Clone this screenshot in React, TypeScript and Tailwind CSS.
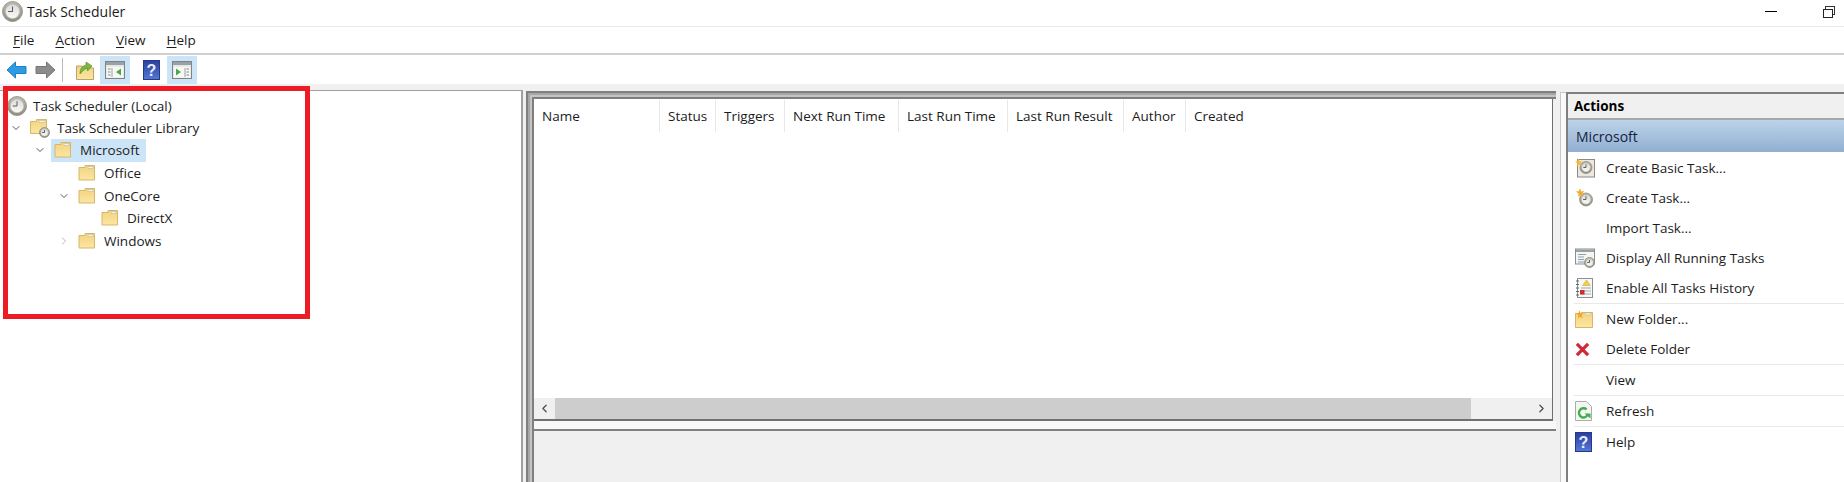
import React from 'react';
import { ChevronDown, ChevronLeft, ChevronRight } from 'lucide-react';

const ClockFace = ({ cx, cy, r }: { cx: number; cy: number; r: number }) => (
  <g>
    <circle cx={cx} cy={cy} r={r} fill="url(#ring)" stroke="#8d8a80" strokeWidth="0.8" />
    <circle cx={cx} cy={cy} r={r * 0.7} fill="url(#face)" stroke="#c9c6bb" strokeWidth="0.5" />
    <path d={`M${cx} ${cy - r * 0.5}V${cy}H${cx - r * 0.45}`} fill="none" stroke="#5f5f58" strokeWidth="1" />
  </g>
);

const Folder = ({ className = 'w-[18px] h-[18px]' }: { className?: string }) => (
  <svg viewBox="0 0 18 18" className={className}>
    <path d="M1 3.5h6v-2h9.5v14.5H1z" fill="url(#folder)" stroke="#d6b768" strokeWidth="1" />
    <path d="M10 2.5h5v2h-5z" fill="#f5f3ea" stroke="#b9b29a" strokeWidth="0.5" />
  </svg>
);

const FolderClock = () => (
  <svg viewBox="0 0 20 20" className="w-[20px] h-[20px]">
    <path d="M0.5 3.5h6v-2h10v14h-16z" fill="url(#folder)" stroke="#d6b768" strokeWidth="1" />
    <path d="M9 2.5h6v2H9z" fill="#f5f3ea" stroke="#b9b29a" strokeWidth="0.5" />
    <ClockFace cx={14.5} cy={14.5} r={5} />
  </svg>
);

const Clock = ({ size = 'w-[20px] h-[20px]' }: { size?: string }) => (
  <svg viewBox="0 0 20 20" className={size}>
    <ClockFace cx={10} cy={10} r={9.5} />
  </svg>
);

const Arrow = ({ color, edge, flip }: { color: string; edge: string; flip?: boolean }) => (
  <svg viewBox="0 0 21 18" className={`w-[21px] h-[18px] ${flip ? '-scale-x-100' : ''}`}>
    <path d="M1 9l8.5-8v4.5h10.5v7H9.5V17z" fill={color} stroke={edge} strokeWidth="1" strokeLinejoin="round" />
  </svg>
);

const HelpBook = ({ size = 'w-[17px] h-[20px]' }: { size?: string }) => (
  <svg viewBox="0 0 17 20" className={size}>
    <rect x="0.5" y="0.5" width="16" height="19" fill="url(#help)" stroke="#24398a" />
    <text x="8.5" y="15.5" textAnchor="middle" fontSize="16" fontWeight="700" fontFamily="Liberation Sans, sans-serif" fill="#e8ecff">?</text>
  </svg>
);

const PaneToggle = ({ right }: { right?: boolean }) => (
  <svg viewBox="0 0 20 18" className="w-[20px] h-[18px]">
    <rect x="0.5" y="0.5" width="19" height="17" fill="#e9e9e4" stroke="#7f8487" />
    <rect x="1" y="1" width="18" height="3" fill="#9aa0a3" />
    <rect x="2" y="6" width="16" height="10.5" fill="#f8f8f4" />
    {right ? (
      <>
        <path d="M4 7.5l5 3.5-5 3.5z" fill="#4aa84a" />
        <path d="M13 7v9" stroke="#9aa0a3" />
        <path d="M14.5 8h2.5M14.5 11h2.5M14.5 14h2.5" stroke="#7f8487" />
      </>
    ) : (
      <>
        <path d="M16 7.5l-5 3.5 5 3.5z" fill="#4aa84a" />
        <path d="M7 7v9" stroke="#9aa0a3" />
        <path d="M3 8h2.5M3 11h2.5M3 14h2.5" stroke="#7f8487" />
      </>
    )}
  </svg>
);

const UpFolder = () => (
  <svg viewBox="0 0 18 20" className="w-[18px] h-[20px]">
    <path d="M0.5 6h6l1.5 2h9.5v11.5H0.5z" fill="url(#folder)" stroke="#b9a468" />
    <path d="M4 14c0-5 2-8 6-9V2l6 4-4.5 5V8c-3 1-5 3-7.5 6z" fill="#7ab83f" stroke="#4d8a28" strokeWidth="0.6" />
  </svg>
);

const BasicTaskIcon = () => (
  <svg viewBox="0 0 20 20" className="w-[20px] h-[20px]">
    <rect x="2.5" y="1.5" width="17" height="17.5" fill="#ece8df" stroke="#8f8a80" />
    <ClockFace cx={11} cy={9.5} r={6} />
    <path d="M0 3l2.2 0.6L3.5 0.5l1.2 3 3-0.4-2 2.2 1.2 2.7-3-1.2-2 1.6 0.4-2.8z" fill="#f4bb3a" />
  </svg>
);

const NewTaskIcon = () => (
  <svg viewBox="0 0 20 20" className="w-[20px] h-[20px]">
    <ClockFace cx={11} cy={11.5} r={6.5} />
    <path d="M1 3l2.4 0.6L5 0.5l1.2 3 3.2-0.4-2 2.4 1.2 2.8-3-1.2-2.4 1.8 0.4-3z" fill="#f4ab2a" />
  </svg>
);

const DisplayIcon = () => (
  <svg viewBox="0 0 20 20" className="w-[20px] h-[20px]">
    <rect x="0.5" y="1" width="19" height="15" fill="#f4f4f0" stroke="#8a9095" />
    <rect x="1" y="1.5" width="18" height="2.5" fill="#9aa0a3" />
    <path d="M3 6.5h8M3 9h6M3 11.5h6M3 14h6" stroke="#8ea1b5" />
    <ClockFace cx={14.5} cy={14.5} r={5} />
  </svg>
);

const HistoryIcon = () => (
  <svg viewBox="0 0 18 20" className="w-[18px] h-[20px]">
    <rect x="2.5" y="0.5" width="15" height="19" fill="#f8f8f6" stroke="#8a9095" />
    <path d="M1 3h3M1 6.5h3M1 10h3M1 13.5h3M1 17h3" stroke="#5a6a78" />
    <path d="M11.5 2l4 5.5h-8z" fill="#f2cf4a" stroke="#c9a52a" strokeWidth="0.5" />
    <path d="M6 10h10M6 13h10M6 16h10" stroke="#9aa6b2" />
    <rect x="5" y="12" width="4.5" height="4.5" fill="#c9302c" />
  </svg>
);

const NewFolderIcon = () => (
  <svg viewBox="0 0 18 18" className="w-[18px] h-[18px]">
    <path d="M0.5 3.5h6v-1h11v15H0.5z" fill="url(#folder)" stroke="#d6b768" />
    <path d="M10 3h6v2h-6z" fill="#f5f3ea" stroke="#b9b29a" strokeWidth="0.5" />
    <path d="M1 3l2.3 0.6L4.5 0.5l1.2 3 3-0.4-2 2.2 1.2 2.7-3-1.2-2 1.6 0.4-2.8z" fill="#f2a72c" />
  </svg>
);

const DeleteIcon = () => (
  <svg viewBox="0 0 16 16" className="w-[15px] h-[15px]">
    <path d="M2 2l12 12M14 2L2 14" stroke="#cf2a36" strokeWidth="3.4" />
  </svg>
);

const RefreshIcon = () => (
  <svg viewBox="0 0 17 20" className="w-[17px] h-[20px]">
    <path d="M0.5 0.5h11l5 5v14H0.5z" fill="#f4f6f2" stroke="#a9aea8" />
    <path d="M13 13a4.6 4.6 0 1 1-1.4-4.6" fill="none" stroke="#45ad4f" strokeWidth="2.4" />
    <path d="M9.5 12.5h6v5z" fill="#45ad4f" />
  </svg>
);

const menuItems: [string, string][] = [
  ['F', 'ile'],
  ['A', 'ction'],
  ['V', 'iew'],
  ['H', 'elp'],
];

const columns = [
  { label: 'Name', width: 'w-[126px]' },
  { label: 'Status', width: 'w-[56px]' },
  { label: 'Triggers', width: 'w-[69px]' },
  { label: 'Next Run Time', width: 'w-[114px]' },
  { label: 'Last Run Time', width: 'w-[109px]' },
  { label: 'Last Run Result', width: 'w-[116px]' },
  { label: 'Author', width: 'w-[62px]' },
];

const TreeRow = ({
  indent,
  icon,
  label,
  chevron,
  selected,
  gap = 'gap-[8px]',
}: {
  indent: string;
  icon: React.ReactNode;
  label: string;
  chevron?: 'down' | 'right';
  selected?: boolean;
  gap?: string;
}) => (
  <div className={`flex h-[22.6px] items-center ${indent}`}>
    <span className="flex w-[14px] shrink-0 justify-center">
      {chevron === 'down' && <ChevronDown size={12} strokeWidth={1.8} className="text-[#444444]" />}
      {chevron === 'right' && <ChevronRight size={12} strokeWidth={1.6} className="text-[#a6a6a6]" />}
    </span>
    <div className={`ml-[4px] flex h-[22.6px] items-center pl-[3px] pr-[6px] ${gap} ${selected ? 'bg-[#cce4f7]' : ''}`}>
      {icon}
      <span>{label}</span>
    </div>
  </div>
);

const ActionRow = ({
  icon,
  label,
  sep,
}: {
  icon?: React.ReactNode;
  label: string;
  sep?: boolean;
}) => (
  <div className={`ml-[6px] flex items-center ${sep ? 'h-[31px] border-t border-[#e8e8e8]' : 'h-[30px]'}`}>
    <span className="flex w-[32px] shrink-0 items-center pl-[1px]">{icon}</span>
    <span>{label}</span>
  </div>
);

export default function App() {
  return (
    <div className="relative flex h-[482px] w-[1844px] flex-col overflow-hidden bg-white font-['Open_Sans',sans-serif] text-[13.5px] text-[#1c1c1c]">
      {/* shared gradients for the icons */}
      <svg className="absolute h-0 w-0">
        <defs>
          <linearGradient id="ring" x1="0" y1="0" x2="0" y2="1">
            <stop offset="0" stopColor="#bdbab0" />
            <stop offset="1" stopColor="#908d83" />
          </linearGradient>
          <linearGradient id="face" x1="0" y1="0" x2="0" y2="1">
            <stop offset="0" stopColor="#d9dbe0" />
            <stop offset="1" stopColor="#fbfaf2" />
          </linearGradient>
          <linearGradient id="folder" x1="0" y1="0" x2="0" y2="1">
            <stop offset="0" stopColor="#f3d37e" />
            <stop offset="1" stopColor="#fbe6a2" />
          </linearGradient>
          <linearGradient id="help" x1="0" y1="0" x2="0" y2="1">
            <stop offset="0" stopColor="#2a3f9c" />
            <stop offset="1" stopColor="#5577d6" />
          </linearGradient>
        </defs>
      </svg>

      {/* title bar */}
      <div className="flex h-[27px] shrink-0 items-center border-b border-[#e9e9e9] pb-[3px] pl-[2px] text-[14px]">
        <Clock size="h-[21px] w-[21px]" />
        <span className="ml-[4px]">Task Scheduler</span>
        <div className="ml-auto mr-[9px] flex items-center gap-[46px]">
          <span className="h-px w-[12px] bg-black" />
          <span className="relative h-[12px] w-[12px]">
            <span className="absolute left-[2px] top-0 h-[9px] w-[10px] border border-[#333333]" />
            <span className="absolute bottom-0 left-0 h-[9px] w-[10px] border border-[#222222] bg-white" />
          </span>
        </div>
      </div>

      {/* menu */}
      <div className="flex h-[28px] shrink-0 items-center gap-[21px] border-b-2 border-[#d0d0d0] pl-[13px]">
        {menuItems.map(([first, rest]) => (
          <span key={first}>
            <span className="underline underline-offset-2">{first}</span>
            {rest}
          </span>
        ))}
      </div>

      {/* toolbar */}
      <div className="flex h-[29px] shrink-0 items-center pl-[6px]">
        <Arrow color="#2f9be0" edge="#1f7fc4" />
        <span className="ml-[8px]">
          <Arrow color="#8c8c8c" edge="#767676" flip />
        </span>
        <span className="ml-[6px] h-[24px] w-px bg-[#b8b8b8]" />
        <span className="ml-[13px] flex">
          <UpFolder />
        </span>
        <span className="ml-[6px] flex h-[28px] w-[30px] items-center justify-center bg-[#cce4f7]">
          <PaneToggle />
        </span>
        <span className="ml-[13px] flex">
          <HelpBook />
        </span>
        <span className="ml-[7px] flex h-[28px] w-[30px] items-center justify-center bg-[#cce4f7]">
          <PaneToggle right />
        </span>
      </div>

      {/* panes */}
      <div className="flex min-h-0 flex-1 bg-[#f0f0f0]">
        <div className="mt-[6px] w-[523px] shrink-0 border-r-2 border-t border-[#a0a0a0] bg-white pt-[4px]">
          <div className="flex h-[21.6px] items-center gap-[6px] pl-[7px]">
            <Clock />
            <span>Task Scheduler (Local)</span>
          </div>
          <TreeRow indent="pl-[9px]" chevron="down" icon={<FolderClock />} label="Task Scheduler Library" gap="gap-[7px]" />
          <TreeRow indent="pl-[33px]" chevron="down" icon={<Folder />} label="Microsoft" selected />
          <TreeRow indent="pl-[57px]" icon={<Folder />} label="Office" />
          <TreeRow indent="pl-[57px]" chevron="down" icon={<Folder />} label="OneCore" />
          <TreeRow indent="pl-[80px]" icon={<Folder />} label="DirectX" />
          <TreeRow indent="pl-[57px]" chevron="right" icon={<Folder />} label="Windows" />
        </div>

        <div className="ml-[3px] mt-[7px] flex w-[1030px] shrink-0 flex-col border-l-2 border-t-2 border-[#808080]">
          <div className="flex flex-1 flex-col border-l-2 border-t-2 border-[#a6a6a6]">
            <div className="flex flex-1 flex-col border-l-2 border-t-2 border-[#c4c4c4]">
              <div className="flex flex-1 flex-col border-l-2 border-t-2 border-[#7f7f7f]">
                <div className="mr-[3px] flex h-[322px] shrink-0 flex-col border-b-2 border-r border-[#707070] bg-white">
                  <div className="flex flex-1 items-start pt-[1px]">
                    <div className="flex h-[32px] w-full">
                      {columns.map((col) => (
                        <div key={col.label} className={`flex items-center whitespace-nowrap border-r border-[#e8e8e8] pl-[8px] ${col.width}`}>
                          {col.label}
                        </div>
                      ))}
                      <div className="flex items-center pl-[8px]">Created</div>
                    </div>
                  </div>
                  <div className="flex h-[21px] shrink-0 bg-[#f0f0f0]">
                    <span className="flex w-[21px] items-center justify-center text-[#505050]">
                      <ChevronLeft size={13} strokeWidth={2.4} />
                    </span>
                    <span className="w-[916px] bg-[#cdcdcd]" />
                    <span className="flex-1" />
                    <span className="flex w-[21px] items-center justify-center text-[#505050]">
                      <ChevronRight size={13} strokeWidth={2.4} />
                    </span>
                  </div>
                </div>
                <div className="h-[8px] shrink-0 bg-[#f8f8f8]" />
                <div className="flex-1 border-t-2 border-[#808080] bg-[#f0f0f0]" />
              </div>
            </div>
          </div>
        </div>

        <div className="ml-[4px] mt-[8px] w-[6px] shrink-0 border-l border-t border-[#c8c8c8] bg-[#fafafa]" />

        <div className="mt-[8px] flex-1 border-l-2 border-t-2 border-[#808080] bg-white">
          <div className="flex h-[26px] items-center border-b-2 border-[#a8a8a8] bg-[#f0f0f0] pl-[6px] font-bold text-black">
            Actions
          </div>
          <div className="mb-[1px] flex h-[32px] items-center bg-gradient-to-b from-[#bcd3ea] to-[#92afd1] pl-[8px] pt-[1px] text-[14px] text-[#14233c]">
            Microsoft
          </div>
          <ActionRow icon={<BasicTaskIcon />} label="Create Basic Task..." />
          <ActionRow icon={<NewTaskIcon />} label="Create Task..." />
          <ActionRow label="Import Task..." />
          <ActionRow icon={<DisplayIcon />} label="Display All Running Tasks" />
          <ActionRow icon={<HistoryIcon />} label="Enable All Tasks History" />
          <ActionRow sep icon={<NewFolderIcon />} label="New Folder..." />
          <ActionRow icon={<DeleteIcon />} label="Delete Folder" />
          <ActionRow sep label="View" />
          <ActionRow sep icon={<RefreshIcon />} label="Refresh" />
          <ActionRow sep icon={<HelpBook size="h-[20px] w-[17px]" />} label="Help" />
        </div>
      </div>

      {/* red annotation box around the tree */}
      <div className="pointer-events-none absolute left-[3px] top-[86px] h-[233px] w-[307px] border-[5px] border-[#ed1c24]" />
    </div>
  );
}
